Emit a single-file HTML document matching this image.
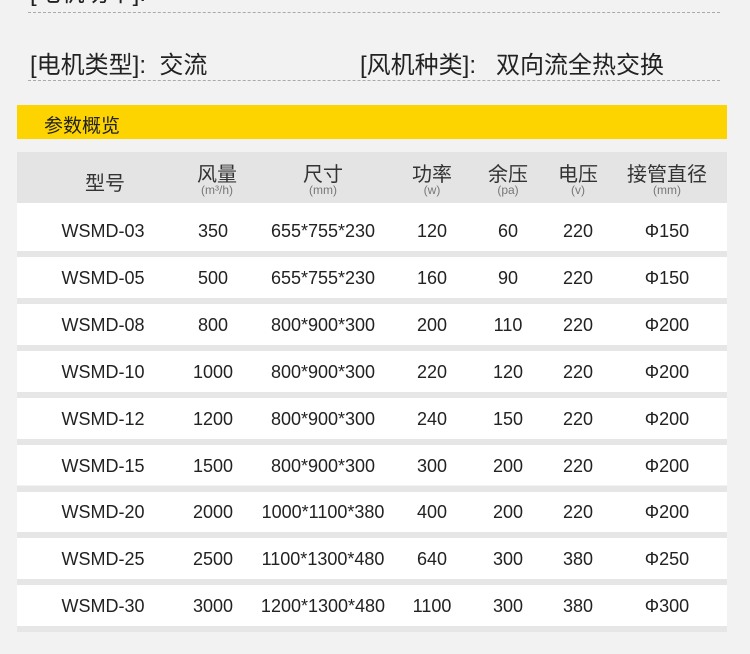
<!DOCTYPE html>
<html><head><meta charset="utf-8"><style>
body{margin:0;width:750px;height:654px;background:#f2f2f2;position:relative;overflow:hidden;font-family:"Liberation Sans","Noto Sans CJK SC",sans-serif;color:#222}
.dash{position:absolute;left:28px;width:692px;border-top:1px dashed #aaa}
.t{position:absolute;font-size:24px;color:#222;white-space:nowrap}
.yb{position:absolute;left:17px;top:105px;width:710px;height:34px;background:#fdd400}
.yb span{position:absolute;left:27px;top:6px;font-size:19px;color:#222}
.hd{position:absolute;left:17px;top:152px;width:710px;height:51px;background:#e4e4e4}
.row{position:absolute;left:17px;width:710px;background:#fff}
.gap{position:absolute;left:17px;width:710px;background:#e6e6e6}
.c{position:absolute;transform:translateX(-50%);white-space:nowrap;font-size:18px;color:#222}
.h1{position:absolute;transform:translateX(-50%);white-space:nowrap;font-size:20px;color:#333;text-align:center}
.h2{position:absolute;transform:translateX(-50%);white-space:nowrap;font-size:12px;color:#777}
</style></head><body>
<div class="t" style="left:30px;top:-27px">[电机功率]: </div>
<div class="dash" style="top:12px"></div>
<div class="t" style="left:30px;top:45px">[电机类型]:&nbsp; 交流</div>
<div class="t" style="left:360px;top:45px">[风机种类]:&nbsp;&nbsp; 双向流全热交换</div>
<div class="dash" style="top:80px"></div>
<div class="yb"><span>参数概览</span></div>
<div class="hd"></div>
<div class="h1" style="left:105px;top:167px">型号</div>
<div class="h1" style="left:217px;top:158px">风量</div><div class="h2" style="left:217px;top:183px">(m³/h)</div>
<div class="h1" style="left:323px;top:158px">尺寸</div><div class="h2" style="left:323px;top:183px">(mm)</div>
<div class="h1" style="left:432px;top:158px">功率</div><div class="h2" style="left:432px;top:183px">(w)</div>
<div class="h1" style="left:508px;top:158px">余压</div><div class="h2" style="left:508px;top:183px">(pa)</div>
<div class="h1" style="left:578px;top:158px">电压</div><div class="h2" style="left:578px;top:183px">(v)</div>
<div class="h1" style="left:667px;top:158px">接管直径</div><div class="h2" style="left:667px;top:183px">(mm)</div>
<div id="rows"></div>
<script>
var d=[["WSMD-03","350","655*755*230","120","60","220","Φ150"],
["WSMD-05","500","655*755*230","160","90","220","Φ150"],
["WSMD-08","800","800*900*300","200","110","220","Φ200"],
["WSMD-10","1000","800*900*300","220","120","220","Φ200"],
["WSMD-12","1200","800*900*300","240","150","220","Φ200"],
["WSMD-15","1500","800*900*300","300","200","220","Φ200"],
["WSMD-20","2000","1000*1100*380","400","200","220","Φ200"],
["WSMD-25","2500","1100*1300*480","640","300","380","Φ250"],
["WSMD-30","3000","1200*1300*480","1100","300","380","Φ300"]];
var xs=[103,213,323,432,508,578,667],h="";
d.forEach(function(r,i){var top=i==0?203:257+(i-1)*46.9;var bot=251+i*46.9;var cy=231+i*46.9;
h+='<div class="row" style="top:'+top+'px;height:'+(bot-top)+'px"></div><div class="gap" style="top:'+bot+'px;height:6px"></div>';
r.forEach(function(v,j){h+='<div class="c" style="left:'+xs[j]+'px;top:'+(cy-10)+'px">'+v+'</div>';});});
document.getElementById('rows').innerHTML=h;
</script>
</body></html>
